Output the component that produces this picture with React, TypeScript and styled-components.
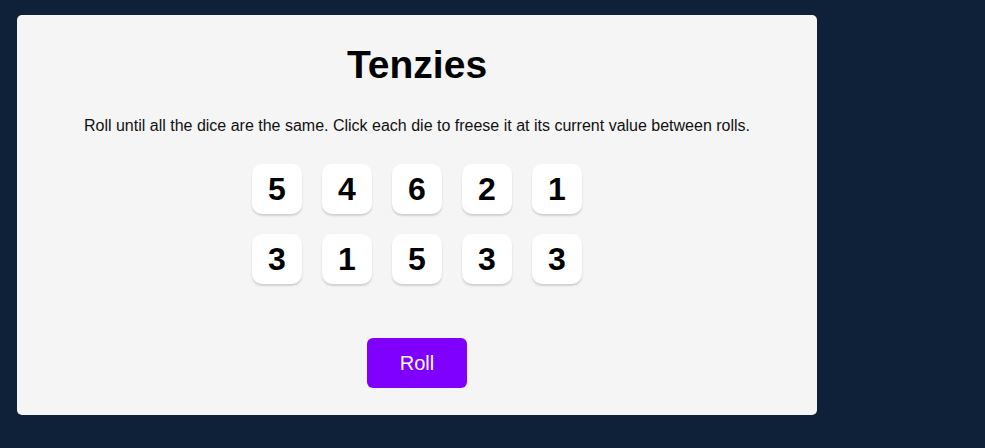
import React from "react";
import styled, { createGlobalStyle } from "styled-components";

const GlobalStyle = createGlobalStyle`
  html, body {
    margin: 0;
    padding: 0;
    background: #0f2138;
    font-family: "Liberation Sans", Arial, sans-serif;
  }
  * { box-sizing: border-box; }
`;

const Page = styled.div`
  padding: 15px 0 0 17px;
  min-height: 448px;
`;

const Panel = styled.main`
  width: 800px;
  height: 400px;
  background: #f5f5f5;
  border-radius: 5px;
  display: flex;
  flex-direction: column;
  align-items: center;
  padding-top: 28px;
`;

const Title = styled.h1`
  margin: 0;
  font-size: 39px;
  font-weight: 700;
  color: #000;
  line-height: normal;
`;

const Instructions = styled.p`
  margin: 30px 0 0;
  font-size: 16px;
  line-height: normal;
  color: #111;
  text-align: center;
`;

const DiceGrid = styled.div`
  margin-top: 29px;
  display: grid;
  grid-template-columns: repeat(5, 50px);
  grid-auto-rows: 50px;
  gap: 20px;
`;

const Die = styled.button`
  width: 50px;
  height: 50px;
  border: none;
  border-radius: 10px;
  background: #ffffff;
  box-shadow: 0 2px 2px rgba(0, 0, 0, 0.15);
  font-family: "Liberation Sans", Arial, sans-serif;
  font-size: 32px;
  font-weight: 700;
  color: #000;
  display: flex;
  align-items: center;
  justify-content: center;
  padding: 0;
  cursor: pointer;
`;

const RollButton = styled.button`
  margin-top: 54px;
  width: 100px;
  height: 50px;
  border: none;
  border-radius: 6px;
  background: #8000ff;
  color: #ffffff;
  font-family: "Liberation Sans", Arial, sans-serif;
  font-size: 20px;
  cursor: pointer;
`;

const dice = [5, 4, 6, 2, 1, 3, 1, 5, 3, 3];

export default function App() {
  return (
    <>
      <GlobalStyle />
      <Page>
        <Panel>
          <Title>Tenzies</Title>
          <Instructions>
            Roll until all the dice are the same. Click each die to freese it at its current value between rolls.
          </Instructions>
          <DiceGrid>
            {dice.map((v, i) => (
              <Die key={i}>{v}</Die>
            ))}
          </DiceGrid>
          <RollButton>Roll</RollButton>
        </Panel>
      </Page>
    </>
  );
}
